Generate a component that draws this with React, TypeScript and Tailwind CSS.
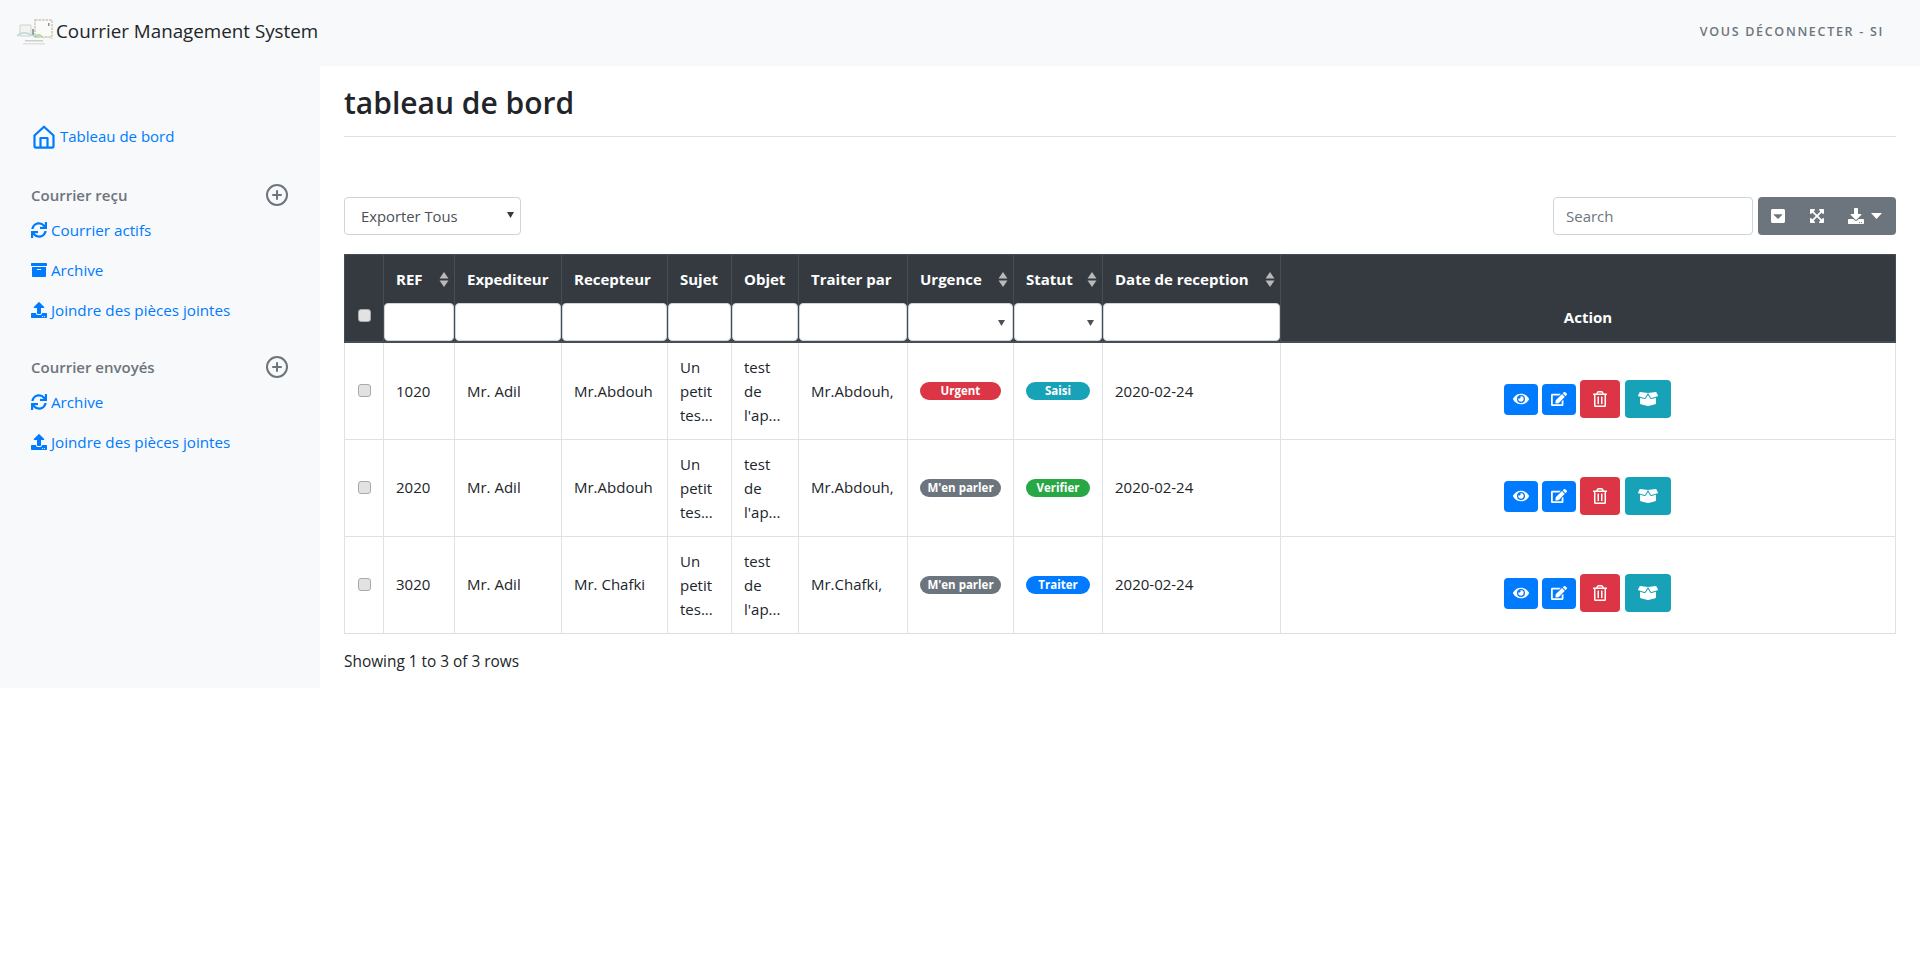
import { CirclePlus } from "lucide-react";
import { FaArchive, FaBoxOpen, FaCaretSquareDown, FaDownload, FaEdit, FaExpandArrowsAlt, FaEye, FaRegTrashAlt, FaSync, FaUpload } from "react-icons/fa";
import type { ReactNode } from "react";

const font = { fontFamily: '"Open Sans", "Noto Sans", sans-serif' };

function Logo() {
    return (
        <svg width="38" height="30" viewBox="0 0 38 30" className="mr-[2px] mb-[1px] shrink-0 opacity-80">
            <path d="M4 9h11v11H4z" fill="#f2f2ee" stroke="#c9c9c2" strokeWidth="1" />
            <path d="M19 4h17v17H19z" fill="#fbfbf8" stroke="#b9b9b2" strokeWidth="1.4" strokeDasharray="2.5 1" />
            <rect x="32" y="7" width="1.5" height="3" fill="#777" />
            <rect x="16" y="13" width="2" height="6" fill="#8a8a86" />
            <path d="M1 20c4-4 8-4 12-2s7 3 10 3" fill="none" stroke="#a8d4d8" strokeWidth="1.5" />
            <path d="M19 21c2-3 5-3 7 0" fill="none" stroke="#9cc96b" strokeWidth="1.5" />
            <path d="M27 22c3-1 6-1 10 1" fill="none" stroke="#e5d690" strokeWidth="1" />
            <rect x="9" y="24" width="18" height="1.5" fill="#c4c4c4" />
            <rect x="7" y="27" width="22" height="1.5" fill="#dadada" />
        </svg>
    )
}

function HomeIcon() {
    return (
        <svg width="22" height="24" viewBox="0 0 22 24" fill="none" stroke="#007bff" strokeWidth="2.2" strokeLinejoin="round" className="shrink-0 mt-[2px]">
            <path d="M1.5 10.5 11 1.7l9.500 8.800V21a1.600 1.600 0 0 1-1.600 1.600H3.100A1.600 1.600 0 0 1 1.500 21z" />
            <path d="M7.5 22.500V13h7v9.500" />
        </svg>
    )
}

function SideLink({ icon, children }: { icon: ReactNode; children: ReactNode }) {
    return (
        <a className="h-10 flex items-center gap-1 text-[#007bff] text-[15.2px]">
            <span className="w-4 flex justify-center text-[16px]">{icon}</span>
            {children}
        </a>
    )
}

function SideHeading({ children }: { children: ReactNode }) {
    return (
        <div className="flex items-center justify-between h-6 text-[#6c757d] text-[15px] font-semibold pr-[31px]">
            {children}
            <CirclePlus size={24} strokeWidth={2} />
        </div>
    )
}

function SortIcon() {
    return (
        <svg width="10" height="15" viewBox="0 0 10 15" className="shrink-0">
            <path d="M5 0l4.500 6.500H.5z" fill="#b9b9b9" />
            <path d="M5 15l4.500-6.500H.5z" fill="#b9b9b9" />
        </svg>
    )
}

function Check() {
    return <input type="checkbox" className="appearance-none block w-[13px] h-[13px] mx-auto rounded-[3px] bg-[#e2e2e2] border border-[#a9a9a9]" />
}

type Col = { title: string; sort?: boolean; select?: boolean }

const cols: Col[] = [
    { title: "REF", sort: true },
    { title: "Expediteur" },
    { title: "Recepteur" },
    { title: "Sujet" },
    { title: "Objet" },
    { title: "Traiter par" },
    { title: "Urgence", sort: true, select: true },
    { title: "Statut", sort: true, select: true },
    { title: "Date de reception", sort: true },
]

const rows = [
    { ref: "1020", to: "Mr.Abdouh", by: "Mr.Abdouh,", urgence: "Urgent", urgenceBg: "bg-[#dc3545]", statut: "Saisi", statutBg: "bg-[#17a2b8]" },
    { ref: "2020", to: "Mr.Abdouh", by: "Mr.Abdouh,", urgence: "M'en parler", urgenceBg: "bg-[#6c757d]", statut: "Verifier", statutBg: "bg-[#28a745]" },
    { ref: "3020", to: "Mr. Chafki", by: "Mr.Chafki,", urgence: "M'en parler", urgenceBg: "bg-[#6c757d]", statut: "Traiter", statutBg: "bg-[#007bff]" },
]

const cell = "border border-[#dee2e6] px-3 align-middle"

function Badge({ bg, children }: { bg: string; children: ReactNode }) {
    return <div className={`${bg} h-[18px] rounded-full text-white text-[11.5px] font-bold flex items-center justify-center whitespace-nowrap`}>{children}</div>
}

export default function App() {
    return (
        <div style={font} className="text-[#212529] text-[15px] bg-white min-h-[969px]">
            <header className="h-[66px] bg-[#f8f9fa] flex items-center justify-between pl-4 pr-[36px]">
                <div className="flex items-center text-[18.8px] pb-[3px]">
                    <Logo />
                    Courrier Management System
                </div>
                <a className="text-[#6c757d] text-[12.5px] font-semibold uppercase tracking-[1.7px] pb-[2px]">Vous déconnecter - SI</a>
            </header>
            <div className="flex items-start">
                <aside className="w-[320px] h-[622px] shrink-0 bg-[#f8f9fa] pl-[31px] pt-[58px]">
                    <a className="flex items-center gap-[5px] h-6 pl-[2px] text-[#007bff] text-[15px]">
                        <HomeIcon />
                        Tableau de bord
                    </a>
                    <div className="mt-[35px]"><SideHeading>Courrier reçu</SideHeading></div>
                    <div className="mt-[3px]">
                        <SideLink icon={<FaSync />}>Courrier actifs</SideLink>
                        <SideLink icon={<FaArchive />}>Archive</SideLink>
                        <SideLink icon={<FaUpload />}>Joindre des pièces jointes</SideLink>
                    </div>
                    <div className="mt-[25px]"><SideHeading>Courrier envoyés</SideHeading></div>
                    <div className="mt-[3px]">
                        <SideLink icon={<FaSync />}>Archive</SideLink>
                        <SideLink icon={<FaUpload />}>Joindre des pièces jointes</SideLink>
                    </div>
                </aside>
                <main className="flex-1 pl-6 pr-6">
                    <div className="h-[71px] border-b border-[#dee2e6] flex items-center">
                        <h1 className="text-[30px] font-semibold leading-none pt-[3px]">tableau de bord</h1>
                    </div>
                    <div className="mt-[60px] flex items-center justify-between">
                        <div className="relative w-[177px]">
                            <select className="appearance-none w-full h-[38px] pl-4 bg-white border border-[#ced4da] rounded text-[#495057] text-[14.8px]">
                                <option>Exporter Tous</option>
                            </select>
                            <svg width="7" height="6" viewBox="0 0 7 6" className="absolute right-[7px] top-[15px]"><path d="M0 0h7L3.500 6z" fill="#343a40" /></svg>
                        </div>
                        <div className="flex items-center gap-[5px]">
                            <input placeholder="Search" className="w-[200px] h-[38px] px-3 bg-white border border-[#ced4da] rounded text-[15px] placeholder:text-[#6c757d]" />
                            <div className="w-[138px] h-[38px] bg-[#6c757d] rounded text-white flex items-center pl-[12px] text-[16px]">
                                <FaCaretSquareDown />
                                <span className="ml-[23px]"><FaExpandArrowsAlt /></span>
                                <span className="ml-[23px]"><FaDownload /></span>
                                <svg width="11" height="6" viewBox="0 0 11 6" className="ml-[7px]"><path d="M0 0h11L5.500 6z" fill="#fff" /></svg>
                            </div>
                        </div>
                    </div>
                    <table className="mt-[19px] w-[1552px] table-fixed border-collapse border border-[#dee2e6]">
                        <colgroup>
                            <col className="w-[39px]" />
                            <col className="w-[71px]" />
                            <col className="w-[107px]" />
                            <col className="w-[106px]" />
                            <col className="w-[64px]" />
                            <col className="w-[67px]" />
                            <col className="w-[109px]" />
                            <col className="w-[106px]" />
                            <col className="w-[89px]" />
                            <col className="w-[178px]" />
                            <col />
                        </colgroup>
                        <thead>
                            <tr className="bg-[#343a40] text-white">
                                <th className="border border-[#454d55] border-b-2 align-bottom pb-[19px]"><Check /></th>
                                {cols.map(col => (
                                    <th key={col.title} className="border border-[#454d55] border-b-2 p-0 align-top font-bold text-left">
                                        <div className="h-[48px] pl-3 pr-[5px] flex items-center justify-between whitespace-nowrap">
                                            {col.title}
                                            {col.sort && <SortIcon />}
                                        </div>
                                        <div className="relative h-[38px] bg-white rounded border border-[#ced4da]">
                                            {col.select && <svg width="7" height="6" viewBox="0 0 7 6" className="absolute right-[7px] top-[16px]"><path d="M0 0h7L3.500 6z" fill="#495057" /></svg>}
                                        </div>
                                    </th>
                                ))}
                                <th className="border border-[#454d55] border-b-2 align-bottom text-center font-bold pb-[13px]">Action</th>
                            </tr>
                        </thead>
                        <tbody>
                            {rows.map(row => (
                                <tr key={row.ref} className="h-[97px]">
                                    <td className={`${cell} !px-0`}><Check /></td>
                                    <td className={cell}>{row.ref}</td>
                                    <td className={`${cell} whitespace-nowrap`}>Mr. Adil</td>
                                    <td className={`${cell} whitespace-nowrap`}>{row.to}</td>
                                    <td className={`${cell} leading-6`}>Un<br />petit<br />tes...</td>
                                    <td className={`${cell} leading-6`}>test<br />de<br />l'ap...</td>
                                    <td className={`${cell} whitespace-nowrap`}>{row.by}</td>
                                    <td className={cell}><Badge bg={row.urgenceBg}>{row.urgence}</Badge></td>
                                    <td className={cell}><Badge bg={row.statutBg}>{row.statut}</Badge></td>
                                    <td className={cell}>2020-02-24</td>
                                    <td className={`${cell} !pr-[13px]`}>
                                        <div className="flex items-start justify-center pt-4 text-white text-[16px]">
                                            <a className="w-[34px] h-[31px] mt-[4px] rounded bg-[#007bff] flex items-center justify-center"><FaEye /></a>
                                            <a className="w-[34px] h-[31px] mt-[4px] ml-[4px] rounded bg-[#007bff] flex items-center justify-center"><FaEdit /></a>
                                            <a className="w-[40px] h-[38px] ml-[4px] rounded bg-[#dc3545] flex items-center justify-center"><FaRegTrashAlt /></a>
                                            <a className="w-[46px] h-[38px] ml-[5px] rounded bg-[#17a2b8] flex items-center justify-center text-[20px]"><FaBoxOpen /></a>
                                        </div>
                                    </td>
                                </tr>
                            ))}
                        </tbody>
                    </table>
                    <div className="mt-[16px] text-[15.4px]">Showing 1 to 3 of 3 rows</div>
                </main>
            </div>
        </div>
    )
}
